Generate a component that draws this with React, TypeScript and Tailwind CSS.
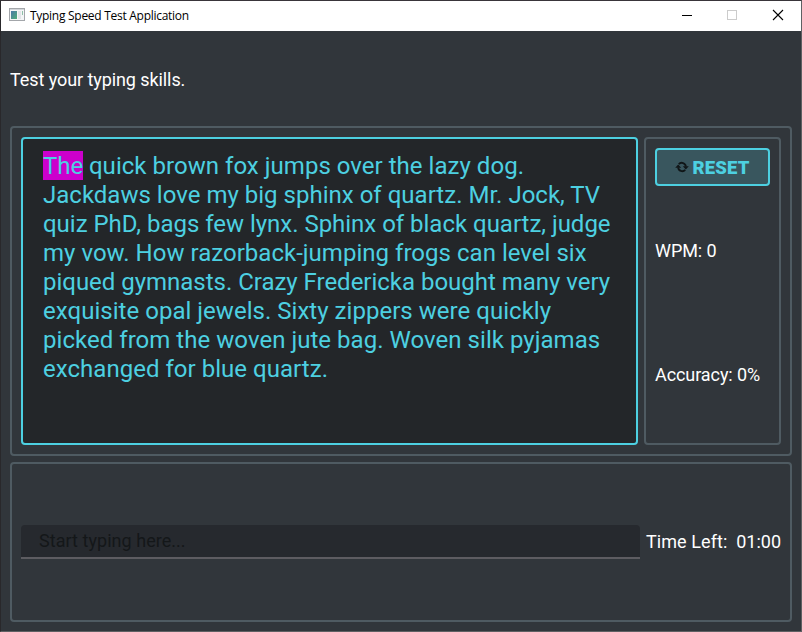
const lines: { text: string; spacing: string }[] = [
  { text: "quick brown fox jumps over the lazy dog.", spacing: "tracking-[0.03px]" },
  { text: "Jackdaws love my big sphinx of quartz. Mr. Jock, TV", spacing: "tracking-[0.01px]" },
  { text: "quiz PhD, bags few lynx. Sphinx of black quartz, judge", spacing: "tracking-[-0.02px]" },
  { text: "my vow. How razorback-jumping frogs can level six", spacing: "tracking-[0.025px]" },
  { text: "piqued gymnasts. Crazy Fredericka bought many very", spacing: "tracking-[-0.02px]" },
  { text: "exquisite opal jewels. Sixty zippers were quickly", spacing: "tracking-[0.03px]" },
  { text: "picked from the woven jute bag. Woven silk pyjamas", spacing: "tracking-[0.035px]" },
  { text: "exchanged for blue quartz.", spacing: "tracking-[0.03px]" },
];

function TitleBar() {
  return (
    <header className="flex h-[30px] shrink-0 items-center bg-white pl-2 font-['Open_Sans',sans-serif] text-black">
      <svg width="16" height="14" viewBox="0 0 16 14" shapeRendering="crispEdges" className="-mt-0.5">
        <defs>
          <linearGradient id="screen" x1="0" y1="0" x2="1" y2="1">
            <stop offset="0" stopColor="#4a78a8" />
            <stop offset="1" stopColor="#4fae78" />
          </linearGradient>
        </defs>
        <rect x="0.5" y="0.5" width="15" height="12" fill="#f4f5f6" stroke="#a3a6aa" />
        <rect x="1" y="1" width="14" height="1" fill="#d3d6da" />
        <rect x="2" y="3" width="6" height="8" fill="url(#screen)" />
        <rect x="9" y="3" width="3" height="8" fill="#e2e5e8" />
        <rect x="13" y="3" width="1" height="4" fill="#8fc0a8" />
      </svg>
      <h1 className="ml-[5px] text-[12px] tracking-[-0.28px]">Typing Speed Test Application</h1>
      <div className="ml-auto flex">
        <svg width="138" height="30" viewBox="0 0 138 30" fill="none">
          <path d="M19 14.5H29" stroke="#000" shapeRendering="crispEdges" />
          <rect x="64.5" y="9.5" width="9" height="9" stroke="#ccc" shapeRendering="crispEdges" />
          <path d="M110 9L120 19M120 9L110 19" stroke="#000" strokeWidth="1.1" />
        </svg>
      </div>
    </header>
  );
}

function ResetIcon() {
  return (
    <svg width="14" height="12" viewBox="0 0 14 12" fill="none">
      <path d="M3.8 3.2A4 4 0 0 1 10.8 5.6M10.2 8.8A4 4 0 0 1 3.2 6.4" stroke="#101618" strokeWidth="1.9" />
      <path d="M7.8 5.2H13.8L10.8 8.4Z M0.2 6.8H6.2L3.2 3.6Z" fill="#101618" />
    </svg>
  );
}

export default function App() {
  return (
    <div className="flex h-[632px] w-[802px] flex-col border border-t-[#39353a] border-r-[#5f6063] border-b-[#5f6063] border-l-[#29282b] bg-[#31363b] font-[Roboto,sans-serif] text-[18px] text-white">
      <TitleBar />
      <main className="flex flex-1 flex-col px-[9px] pb-[9px]">
        <p className="flex h-[95px] items-center pt-0.5">
          <span className="tracking-[-0.08px]">Test your typing skills.</span>
        </p>
        <section className="flex h-[330px] gap-1.5 rounded border-2 border-[#4f5b62] p-[9px]">
          <div className="w-[617px] rounded border-2 border-[#4dd0e1] bg-[#232629] px-5 pt-3 text-[24px] whitespace-nowrap text-[#4dd0e1]">
            {lines.map((line, i) => (
              <div key={line.text} className="h-[29px] leading-[31px]">
                {i === 0 && (
                  <>
                    <span className="inline-block h-[29px] w-10 bg-[#cc00cc] align-top">The</span>
                    <span> </span>
                  </>
                )}
                <span className={line.spacing}>{line.text}</span>
              </div>
            ))}
          </div>
          <aside className="flex w-[137px] flex-col rounded border-2 border-[#4f5b62] p-[9px]">
            <button className="flex h-[38px] items-center justify-center rounded border-2 border-[#4dd0e1] bg-[#39565e] font-black text-[#4dd0e1]">
              <ResetIcon />
              <span className="ml-[3px] pt-0.5 text-[18.5px] leading-6 tracking-[0.2px]">RESET</span>
            </button>
            <div className="flex h-[124px] items-center pt-[4px]">
              <span className="tracking-[-0.08px]">WPM: 0</span>
            </div>
            <div className="flex h-[124px] items-center pt-[4px]">
              <span className="tracking-[-0.08px]">Accuracy: 0%</span>
            </div>
          </aside>
        </section>
        <section className="mt-1.5 flex h-[160px] items-center rounded border-2 border-[#4f5b62] px-[9px]">
          <input
            className="h-[34px] w-[619px] rounded-t border-b-2 border-[#5d5c61] bg-[#26292e] px-[18px] pb-0.5 tracking-[0.04px] outline-none placeholder:text-[#141719] placeholder:opacity-100"
            placeholder="Start typing here..."
          />
          <span className="ml-1.5 pb-0.5 tracking-[0.07px] whitespace-nowrap">Time Left:</span>
          <span className="ml-auto pb-0.5">01:00</span>
        </section>
      </main>
    </div>
  );
}
